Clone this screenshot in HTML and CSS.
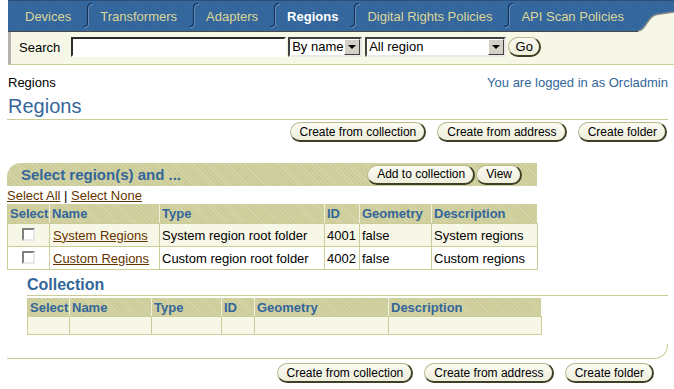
FILE: index.html
```html
<!DOCTYPE html>
<html lang="en">
  <head>
    <meta charset="UTF-8" />
    <title>Regions</title>
    <link rel="stylesheet" href="styles.css">
  </head>

  <body>
    <div class="tabbar">
      <a class="tab first">Devices</a>
      <svg class="sep" width="10" height="26" viewBox="0 0 10 26"><path d="M10 1.5 Q5.5 1.5 5.5 6 L5.5 21 Q5.5 24.5 1 24.5" fill="none" stroke="#6f93c0" stroke-width="1"/><path d="M9 0.5 Q4.5 0.5 4.5 5 L4.5 20 Q4.5 23.5 0 23.5" fill="none" stroke="#14345c" stroke-width="1.2"/></svg>
      <a class="tab">Transformers</a>
      <svg class="sep" width="10" height="26" viewBox="0 0 10 26"><path d="M10 1.5 Q5.5 1.5 5.5 6 L5.5 21 Q5.5 24.5 1 24.5" fill="none" stroke="#6f93c0" stroke-width="1"/><path d="M9 0.5 Q4.5 0.5 4.5 5 L4.5 20 Q4.5 23.5 0 23.5" fill="none" stroke="#14345c" stroke-width="1.2"/></svg>
      <a class="tab">Adapters</a>
      <svg class="sep" width="10" height="26" viewBox="0 0 10 26"><path d="M10 1.5 Q5.5 1.5 5.5 6 L5.5 21 Q5.5 24.5 1 24.5" fill="none" stroke="#6f93c0" stroke-width="1"/><path d="M9 0.5 Q4.5 0.5 4.5 5 L4.5 20 Q4.5 23.5 0 23.5" fill="none" stroke="#14345c" stroke-width="1.2"/></svg>
      <a class="tab current">Regions</a>
      <svg class="sep" width="10" height="26" viewBox="0 0 10 26"><path d="M10 1.5 Q5.5 1.5 5.5 6 L5.5 21 Q5.5 24.5 1 24.5" fill="none" stroke="#6f93c0" stroke-width="1"/><path d="M9 0.5 Q4.5 0.5 4.5 5 L4.5 20 Q4.5 23.5 0 23.5" fill="none" stroke="#14345c" stroke-width="1.2"/></svg>
      <a class="tab">Digital Rights Policies</a>
      <svg class="sep" width="10" height="26" viewBox="0 0 10 26"><path d="M10 1.5 Q5.5 1.5 5.5 6 L5.5 21 Q5.5 24.5 1 24.5" fill="none" stroke="#6f93c0" stroke-width="1"/><path d="M9 0.5 Q4.5 0.5 4.5 5 L4.5 20 Q4.5 23.5 0 23.5" fill="none" stroke="#14345c" stroke-width="1.2"/></svg>
      <a class="tab">API Scan Policies</a>
      <div class="fill"></div>
      <svg class="corner" width="36" height="33" viewBox="0 0 36 33"><path d="M0 33 L0 32 C8 32 9 17 19 15.5 L36 13 L36 33 Z" fill="#f7f7e7"/><path d="M0 32 C8 32 9 17 19 15.5 L36 13" fill="none" stroke="#8a8a8a" stroke-width="1.5"/></svg>
    </div>

    <div class="searchbar">
      <span class="label">Search</span>
      <input type="text" class="searchbox" />
      <div class="combo byname"><span class="val">By name</span><span class="arrow"></span></div>
      <div class="combo region"><span class="val">All region</span><span class="arrow"></span></div>
      <button class="btn go">Go</button>
    </div>

    <div class="crumbs">
      <span>Regions</span>
      <span class="user">You are logged in as Orcladmin</span>
    </div>

    <h1 class="title">Regions</h1>

    <div class="actions">
      <button class="btn">Create from collection</button>
      <button class="btn">Create from address</button>
      <button class="btn">Create folder</button>
    </div>

    <div class="selbar">
      <span class="seltitle">Select region(s) and ...</span>
      <div class="selbtns">
        <button class="btn">Add to collection</button>
        <button class="btn">View</button>
      </div>
    </div>

    <div class="selectlinks">
      <a href="#">Select All</a> | <a href="#">Select None</a>
    </div>

    <table class="grid main">
      <thead>
        <tr>
          <th class="c1">Select</th>
          <th class="c2">Name</th>
          <th class="c3">Type</th>
          <th class="c4">ID</th>
          <th class="c5">Geometry</th>
          <th class="c6">Description</th>
        </tr>
      </thead>
      <tbody></tbody>
    </table>

    <div class="collection">
      <h2>Collection</h2>
      <table class="grid coll">
        <thead>
          <tr>
            <th class="d1">Select</th>
            <th class="d2">Name</th>
            <th class="d3">Type</th>
            <th class="d4">ID</th>
            <th class="d5">Geometry</th>
            <th class="d6">Description</th>
          </tr>
        </thead>
        <tbody>
          <tr><td></td><td></td><td></td><td></td><td></td><td></td></tr>
        </tbody>
      </table>
    </div>

    <div class="footer"></div>

    <div class="actions bottom">
      <button class="btn">Create from collection</button>
      <button class="btn">Create from address</button>
      <button class="btn">Create folder</button>
    </div>

    <script>
      const regions = [
        { name: "System Regions", type: "System region root folder", id: 4001, geometry: "false", desc: "System regions" },
        { name: "Custom Regions", type: "Custom region root folder", id: 4002, geometry: "false", desc: "Custom regions" },
      ]
      const tbody = document.querySelector(".main tbody")
      for (let i = 0; i < regions.length; i++) {
        const tr = document.createElement("tr")
        tr.innerHTML = `<td class="chk"><span class="box"></span></td>
          <td><a href="#">${regions[i].name}</a></td>
          <td>${regions[i].type}</td>
          <td>${regions[i].id}</td>
          <td>${regions[i].geometry}</td>
          <td>${regions[i].desc}</td>`
        tbody.appendChild(tr)
      }
    </script>
  </body>
</html>
```

FILE: styles.css
```css
body {
  margin: 0;
  font-family: "Liberation Sans", Arial, sans-serif;
  font-size: 13px;
  color: #000;
  background: #fff;
}

a {
  color: #663300;
}

/* tabs */
.tabbar {
  display: flex;
  align-items: flex-end;
  margin-left: 8px;
  height: 32px;
  background-color: #31659b;
  background-image: repeating-linear-gradient(45deg, rgba(255,255,255,0.04) 0 1px, transparent 1px 3px);
  border-top: 1px solid #2a4f7a;
  box-sizing: border-box;
}

.tab {
  height: 31px;
  line-height: 32px;
  padding: 0 12px 0 7px;
  color: #ddd69a;
  white-space: nowrap;
  box-sizing: border-box;
  border-bottom: 1px solid #4a4a4a;
}

.tab.first {
  padding-left: 17px;
}

.tab.current {
  color: #fff;
  font-weight: bold;
}

.tabbar .sep {
  display: block;
  flex: none;
  height: 26px;
  padding-bottom: 2px;
  border-bottom: 1px solid #4a4a4a;
}

.tabbar .fill {
  flex: 1;
  align-self: stretch;
  border-bottom: 1px solid #4a4a4a;
}

.corner {
  display: block;
  flex: none;
}

/* search */
.searchbar {
  display: flex;
  align-items: center;
  margin-left: 8px;
  height: 32px;
  padding-left: 8px;
  background: #f7f7e7;
  border-left: 3px solid #b4b4aa;
  border-bottom: 1px solid #cccc99;
}

.searchbar .label {
  margin-right: 11px;
  margin-top: -2px;
}

.searchbox {
  width: 215px;
  height: 20px;
  box-sizing: border-box;
  border: 2px inset #d4d0c8;
  border-color: #808080 #fff #fff #808080;
  outline: 1px solid transparent;
  padding: 0;
  margin: -2px 2px 0 0;
  background: #fff;
}

.combo {
  display: flex;
  align-items: center;
  height: 20px;
  box-sizing: border-box;
  border: 2px solid;
  border-color: #404040 #e8e8e8 #e8e8e8 #404040;
  background: #fff;
  margin: -2px 3px 0 0;
}

.combo .val {
  flex: 1;
  padding-left: 2px;
  font-size: 13px;
  line-height: 16px;
}

.combo .arrow {
  position: relative;
  width: 16px;
  height: 16px;
  box-sizing: border-box;
  background: #d4d0c8;
  border: 1px solid;
  border-color: #fff #404040 #404040 #fff;
}

.combo .arrow::after {
  content: "";
  position: absolute;
  left: 3px;
  top: 5px;
  border-left: 4px solid transparent;
  border-right: 4px solid transparent;
  border-top: 4px solid #000;
}

.byname {
  width: 74px;
}

.region {
  width: 141px;
  margin-right: 2px;
}

/* buttons */
.btn {
  height: 20px;
  padding: 0 8px 0 9px;
  font-family: "Liberation Sans", Arial, sans-serif;
  font-size: 12px;
  color: #000;
  background: linear-gradient(#fbfbf2, #eeeedc);
  border: 1px solid;
  border-width: 1px 2px 2px 1px;
  border-color: #b8b891 #3f3f24 #3f3f24 #b8b891;
  border-radius: 10px;
  cursor: pointer;
  white-space: nowrap;
}

.go {
  width: 33px;
  padding: 0;
  font-size: 13px;
  margin-top: -2px;
}

/* header */
.crumbs {
  display: flex;
  justify-content: space-between;
  margin: 10px 6px 0 8px;
  line-height: 16px;
}

.user {
  color: #336699;
}

.title {
  margin: 3px 6px 0 7px;
  padding: 0 0 1px 1px;
  font-size: 20px;
  line-height: 24px;
  font-weight: normal;
  color: #336699;
  border-bottom: 1px solid #cccc99;
}

.actions {
  display: flex;
  justify-content: flex-end;
  gap: 11px;
  margin: 2px 7px 0 0;
}

.actions.bottom {
  margin: 4px 20px 0 0;
}

/* select bar */
.selbar {
  display: flex;
  align-items: center;
  justify-content: space-between;
  margin: 21px 0 0 7px;
  width: 530px;
  height: 23px;
  padding: 0 15px 0 14px;
  box-sizing: border-box;
  background-color: #cccc99;
  background-image: repeating-linear-gradient(45deg, rgba(255,255,255,0.18) 0 1px, transparent 1px 3px);
  border-top-left-radius: 14px;
}

.seltitle {
  font-size: 15px;
  font-weight: bold;
  color: #336699;
}

.selbtns {
  display: flex;
  gap: 1px;
}

.selectlinks {
  margin: 2px 0 0 7px;
  line-height: 16px;
}

/* tables */
.grid {
  border-collapse: collapse;
  table-layout: fixed;
}

.grid th {
  height: 19px;
  padding: 0 0 0 2px;
  text-align: left;
  color: #336699;
  font-weight: bold;
  background-color: #cccc99;
  background-image: repeating-linear-gradient(45deg, rgba(255,255,255,0.18) 0 1px, transparent 1px 3px);
  border-left: 1px solid #efefdc;
  border-bottom: 1px solid #cccc99;
  white-space: nowrap;
  overflow: hidden;
}

.grid th:first-child {
  border-left: 1px solid #cccc99;
}

.grid td {
  height: 22px;
  padding: 0 0 0 2px;
  border: 1px solid #cccc99;
  white-space: nowrap;
  overflow: hidden;
}

.main {
  margin: 0 0 0 7px;
  width: 530px;
}

.main tbody tr:nth-child(odd) {
  background: #f7f7e7;
}

.main tbody tr:nth-child(even) {
  background: #fff;
}

.main td:nth-child(2) {
  padding-left: 3px;
}

.c1 { width: 39px; }
.c2 { width: 107px; }
.c3 { width: 162px; }
.c4 { width: 32px; }
.c5 { width: 69px; }
.c6 { width: 103px; }

.chk {
  text-align: center;
}

.box {
  display: inline-block;
  width: 13px;
  height: 13px;
  box-sizing: border-box;
  vertical-align: middle;
  background: #fff;
  border: 2px solid;
  border-color: #808080 #e8e8e8 #e8e8e8 #808080;
  margin: -3px 0 0 -2px;
}

.collection {
  margin: 6px 6px 0 27px;
}

.collection h2 {
  margin: 0;
  padding-bottom: 1px;
  font-size: 16px;
  line-height: 18px;
  color: #336699;
  border-bottom: 1px solid #cccc99;
}

.coll {
  margin-top: 2px;
  width: 514px;
}

.coll th {
  height: 18px;
}

.coll td {
  height: 17px;
  background: #f7f7e7;
}

.d1 { width: 39px; }
.d2 { width: 79px; }
.d3 { width: 67px; }
.d4 { width: 30px; }
.d5 { width: 131px; }
.d6 { width: 150px; }

.footer {
  margin: 5px 6px 0 7px;
  height: 18px;
  border-bottom: 1px solid #cccc99;
  border-right: 1px solid #cccc99;
  border-bottom-right-radius: 14px;
  clip-path: inset(4px 0 0 0);
}
```
